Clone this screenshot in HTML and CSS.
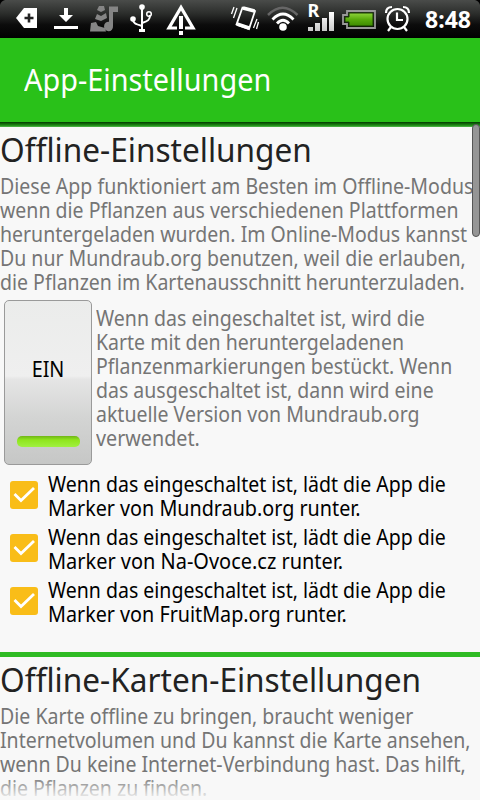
FILE: index.html
```
<!DOCTYPE html>
<html lang="de">
<head>
<meta charset="utf-8">
<title>App-Einstellungen</title>
<link rel="stylesheet" href="styles.css">
</head>
<body>
<div class="screen">
  <div class="status">
    <svg class="icons" width="480" height="38" viewBox="0 0 480 38" fill="none" stroke="#fff">
      <defs>
        <linearGradient id="fade" x1="0" y1="0" x2="0" y2="1"><stop offset="0" stop-color="#fff"/><stop offset="1" stop-color="#c8c8c8"/></linearGradient>
        <linearGradient id="charge" x1="0" y1="0" x2="0" y2="1"><stop offset="0" stop-color="#8fd43c"/><stop offset=".5" stop-color="#58aa0c"/><stop offset="1" stop-color="#3c8a00"/></linearGradient>
      </defs>
      <path d="M0 0H5Q1 1 0 5ZM480 0H475Q479 1 480 5Z" fill="#000" stroke="none"/>
      <path d="M16 18L24 8H37V28H24Z" fill="#fff" stroke="none"/>
      <path d="M29 13.500V22.500M24.500 18H33.500" stroke="#222" stroke-width="2.600"/>
      <path d="M64 8H68V15H73L66 22L59 15H64ZM54 26H78V29H54Z" fill="#fff" stroke="none"/>
      <g fill="#858585" stroke="none">
        <path d="M99 6H104L105 10L101 12L97 10ZM97 14L101 16L106 13L107 18L101 21L95 19ZM91 23L96 22L98 26L105 28L106 31.500H90Z"/>
        <path d="M109 6.500H118V12H113V26A4.500 4.800 0 1 1 109 21.700Z"/>
      </g>
      <g stroke-width="2">
        <path d="M142 7V31M142 26C135 24 133 23 133 19M142 23C148 21 150 20 150 15"/>
        <path d="M139 30.500H145" stroke-width="3"/>
        <circle cx="142" cy="7" r="2.800" fill="#fff" stroke="none"/>
        <circle cx="133" cy="19" r="2.800" fill="#fff" stroke="none"/>
        <circle cx="149" cy="14" r="2.300" stroke-width="1.500"/>
      </g>
      <path d="M177 28H169L181 7.500L193 28H185" stroke-width="3.200"/>
      <path d="M181 16V29M181 31V35" stroke-width="4"/>
      <path d="M242.500 7.500L255 11L249 29L236.500 24.500Z" stroke-width="1.800"/>
      <path d="M243 8L254.500 11M237 24L249 28" stroke-width="3.500"/>
      <path d="M237 8L233.500 18M234 7L231.500 14M253.500 28L257 19M256.500 29L258.500 22" stroke-width="1.300"/>
      <g stroke-width="2.800">
        <path d="M268 15Q282.500 0.500 297.500 15" stroke="#666" stroke-width="2.500"/>
        <path d="M272.500 19.500Q283 8.500 293.500 19.500M277 23.500Q283 17 289 23.500"/>
        <circle cx="283" cy="27" r="3.800" fill="#fff" stroke="none"/>
      </g>
      <path d="M308 27H313V31H308ZM315 23H320V31H315ZM322 18H327V31H322ZM329 12H334V31H329Z" fill="url(#fade)" stroke="none"/>
      <text x="307.500" y="17" class="roaming">R</text>
      <path d="M347 11H375V28H347V24H343V15H347Z" stroke="#999" stroke-width="1.800"/>
      <path d="M349 13H373V26H349V22H345V17H349Z" fill="url(#charge)" stroke="#173b00"/>
      <g stroke-width="2.200">
        <circle cx="397.500" cy="19" r="10"/>
        <path d="M397 12.500V20H403M391 27L388 31M404 27L407 31"/>
        <path d="M386 13Q386 7 392 7M403 7Q409 7 409 13"/>
      </g>
    </svg>
    <span class="clock">8:48</span>
  </div>
  <header class="bar"><h1>App-Einstellungen</h1></header>
  <main>
    <h2>Offline-Einstellungen</h2>
    <p class="info"><span>Diese App funktioniert am Besten im Offline-Modus</span><span>wenn die Pflanzen aus verschiedenen Plattformen</span><span>heruntergeladen wurden. Im Online-Modus kannst</span><span>Du nur Mundraub.org benutzen, weil die erlauben,</span><span>die Pflanzen im Kartenausschnitt herunterzuladen.</span></p>
    <div class="mode">
      <button class="toggle"><span>EIN</span><i></i></button>
      <p class="info"><span>Wenn das eingeschaltet ist, wird die</span><span>Karte mit den heruntergeladenen</span><span>Pflanzenmarkierungen bestückt. Wenn</span><span>das ausgeschaltet ist, dann wird eine</span><span>aktuelle Version von Mundraub.org</span><span class="wide">verwendet.</span></p>
    </div>
    <div class="check"><svg width="28" height="28" viewBox="0 0 28 28"><rect width="28" height="28" rx="3" fill="#f9bd18"/><path d="M4.500 13L11 19.500L24 7" fill="none" stroke="#fff" stroke-width="2.800"/></svg><p><span>Wenn das eingeschaltet ist, lädt die App die</span><span class="wide">Marker von Mundraub.org runter.</span></p></div>
    <div class="check"><svg width="28" height="28" viewBox="0 0 28 28"><rect width="28" height="28" rx="3" fill="#f9bd18"/><path d="M4.500 13L11 19.500L24 7" fill="none" stroke="#fff" stroke-width="2.800"/></svg><p><span>Wenn das eingeschaltet ist, lädt die App die</span><span class="wider">Marker von Na-Ovoce.cz runter.</span></p></div>
    <div class="check"><svg width="28" height="28" viewBox="0 0 28 28"><rect width="28" height="28" rx="3" fill="#f9bd18"/><path d="M4.500 13L11 19.500L24 7" fill="none" stroke="#fff" stroke-width="2.800"/></svg><p><span>Wenn das eingeschaltet ist, lädt die App die</span><span class="wide">Marker von FruitMap.org runter.</span></p></div>
    <hr>
    <h2>Offline-Karten-Einstellungen</h2>
    <p class="info"><span>Die Karte offline zu bringen, braucht weniger</span><span>Internetvolumen und Du kannst die Karte ansehen,</span><span>wenn Du keine Internet-Verbindung hast. Das hilft,</span><span>die Pflanzen zu finden.</span></p>
  </main>
  <div class="scrollbar"></div>
  <div class="fade"></div>
</div>
</body>
</html>
```
FILE: styles.css
```
* { box-sizing: border-box; margin: 0; padding: 0; }
body { background: #f8f8f8; font-family: "Noto Sans", sans-serif; }
.screen { position: relative; width: 480px; height: 800px; overflow: hidden; }
.status { position: relative; height: 38px; background: linear-gradient(#4a4c4a, #2c2e2c 35%, #0c0c0c 65%, #000); }
.icons { display: block; overflow: visible; }
.roaming { font: bold 18px "Noto Sans", sans-serif; fill: #fff; stroke: none; }
.clock { position: absolute; right: 9px; top: 4px; color: #fff; font-size: 23px; line-height: 30px; font-weight: bold; }
.bar { height: 89px; padding: 22px 24px 0; background: linear-gradient(#29c119, #29c119) top / 100% 84px no-repeat, linear-gradient(transparent 84px, #063802 84px, #126d0a 86px, #299d20 88px, #63bd5c); }
h1, h2 { width: max-content; font-weight: normal; white-space: nowrap; transform: scaleX(.957); transform-origin: 0 0; }
h1 { color: #fff; font-size: 30px; line-height: 39px; transform: scaleX(.961); }
h2 { height: 47px; color: #222; font-size: 33px; line-height: 45px; }
p { font-size: 21px; line-height: 24px; white-space: nowrap; color: #000; }
p span { display: block; width: max-content; transform: scaleX(.929); transform-origin: 0 0; }
p .wide { transform: scaleX(.94); }
p .wider { transform: scaleX(.95); }
.info { color: #757575; }
.info span:first-child { transform: scaleX(.931); }
.mode { display: flex; padding: 6px 4px 0; height: 178px; }
.mode .info { padding: 6px 0 0 4px; }
.toggle { position: relative; flex: none; width: 88px; height: 165px; border: 1px solid #9a9a9a; border-radius: 5px; background: linear-gradient(#ebeceb, #efefef 46%, #e5e5e5 48%, #d3d4d3 72%, #c6c7c6); font: 21px "Noto Sans", sans-serif; color: #000; }
.toggle span { display: block; margin-top: -28px; transform: scaleX(.94); }
.toggle i { position: absolute; left: 12px; bottom: 17px; width: 63px; height: 11px; border-radius: 5px; background: linear-gradient(#70b516, #8fe51d 35%, #a0f040); }
.check { display: flex; height: 53px; padding-left: 10px; gap: 10px; }
.check svg { margin-top: 9px; flex: none; }
.check p { width: 422px; }
hr { height: 5px; margin-top: 21px; border: 0; background: #2fbb24; }
.scrollbar { position: absolute; left: 472px; top: 124px; width: 8px; height: 113px; border: 1px solid #555; border-radius: 4px; background: #959595; }
.fade { position: absolute; left: 0; right: 0; bottom: 0; height: 24px; background: linear-gradient(rgba(248,248,248,0), #f8f8f8); }
```
